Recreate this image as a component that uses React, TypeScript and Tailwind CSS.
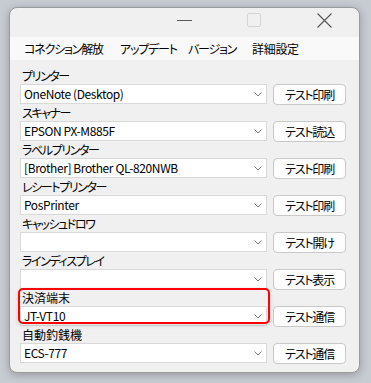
import React from 'react';

type Row = { label: string; value: string; button: string; highlight?: boolean; kanji?: boolean };

const rows: Row[] = [
    { label: 'プリンター', value: 'OneNote (Desktop)', button: 'テスト印刷' },
    { label: 'スキャナー', value: 'EPSON PX-M885F', button: 'テスト読込' },
    { label: 'ラベルプリンター', value: '[Brother] Brother QL-820NWB', button: 'テスト印刷' },
    { label: 'レシートプリンター', value: 'PosPrinter', button: 'テスト印刷' },
    { label: 'キャッシュドロワ', value: '', button: 'テスト開け' },
    { label: 'ラインディスプレイ', value: '', button: 'テスト表示' },
    { label: '決済端末', value: 'JT-VT10', button: 'テスト通信', highlight: true, kanji: true },
    { label: '自動釣銭機', value: 'ECS-777', button: 'テスト通信', kanji: true },
];

const Chevron = () => (
    <svg width="8" height="5" viewBox="0 0 8 5" className="shrink-0">
        <path d="M0.5 0.5 L4 4 L7.5 0.5" fill="none" stroke="#7a7a7a" strokeWidth="1" />
    </svg>
);

const DeviceRow = ({ row }: { row: Row }) => (
    <div className="relative h-[37px] flex flex-col">
        <div className={row.kanji ? 'h-[17px] pl-[2px] text-[12px] leading-[17px] tracking-[0px] text-black' : 'h-[17px] pl-[2px] text-[12px] leading-[17px] tracking-[-1.4px] text-black'}>
            {row.label}
        </div>
        <div className="flex items-start gap-[6px]">
            <div className="w-[247px] h-[20px] bg-white border border-[#d9d9d9] flex items-center justify-between pl-[3px] pr-[4px] text-[12px] text-black">
                <span className="leading-[18px] tracking-[-0.4px]">{row.value}</span>
                <Chevron />
            </div>
            <button className="w-[73px] h-[21px] rounded-[4px] border border-[#c9c9c9] bg-[#fdfdfd] text-[12px] leading-[19px] tracking-[-1.2px] text-black">
                {row.button}
            </button>
        </div>
        {row.highlight && (
            <div className="absolute -top-[1px] -left-[2px] w-[252px] h-[36px] rounded-[5px] border-2 border-[#ff0000] shadow-[0_1px_4px_rgba(0,0,0,0.15)] pointer-events-none" />
        )}
    </div>
);

const App = () => {
    return (
        <div className="w-[371px] h-[383px] bg-[#c7cbd2] pt-[7px] pl-[9px] font-['Noto_Sans_CJK_JP','Noto_Sans',sans-serif] [font-feature-settings:'palt']">
            <div className="w-[351px] h-[366px] rounded-[8px] border border-[#9a9a9a] bg-[#f0f0f0] overflow-hidden shadow-[0_2px_8px_rgba(0,0,0,0.25)]">
                {/* title bar */}
                <div className="h-[29px] flex justify-end">
                    <div className="w-[70px] h-[24px] flex items-center justify-center">
                        <div className="w-[15px] h-[1px] bg-[#5a5a5a]" />
                    </div>
                    <div className="w-[70px] h-[24px] flex items-center justify-center">
                        <div className="w-[14px] h-[14px] rounded-[2px] border border-[#d4d4d4]" />
                    </div>
                    <div className="w-[70px] h-[24px] flex items-center justify-center">
                        <svg width="15" height="15" viewBox="0 0 15 15">
                            <path d="M0.5 0.5 L14.5 14.5 M14.5 0.5 L0.5 14.5" stroke="#555" strokeWidth="1.1" />
                        </svg>
                    </div>
                </div>
                {/* menu bar */}
                <div className="h-[23px] bg-[#f9f9f9] flex items-center pl-[14px] text-[12px] tracking-[-1.2px] text-black">
                    <span className="w-[96px]">コネクション解放</span>
                    <span className="w-[68px]">アップデート</span>
                    <span className="w-[64px]">バージョン</span>
                    <span className="tracking-[-0.3px]">詳細設定</span>
                </div>
                {/* device rows */}
                <div className="pt-[7px] pl-[10px] flex flex-col">
                    {rows.map((r, i) => (
                        <DeviceRow key={i} row={r} />
                    ))}
                </div>
            </div>
        </div>
    );
};

export default App;
